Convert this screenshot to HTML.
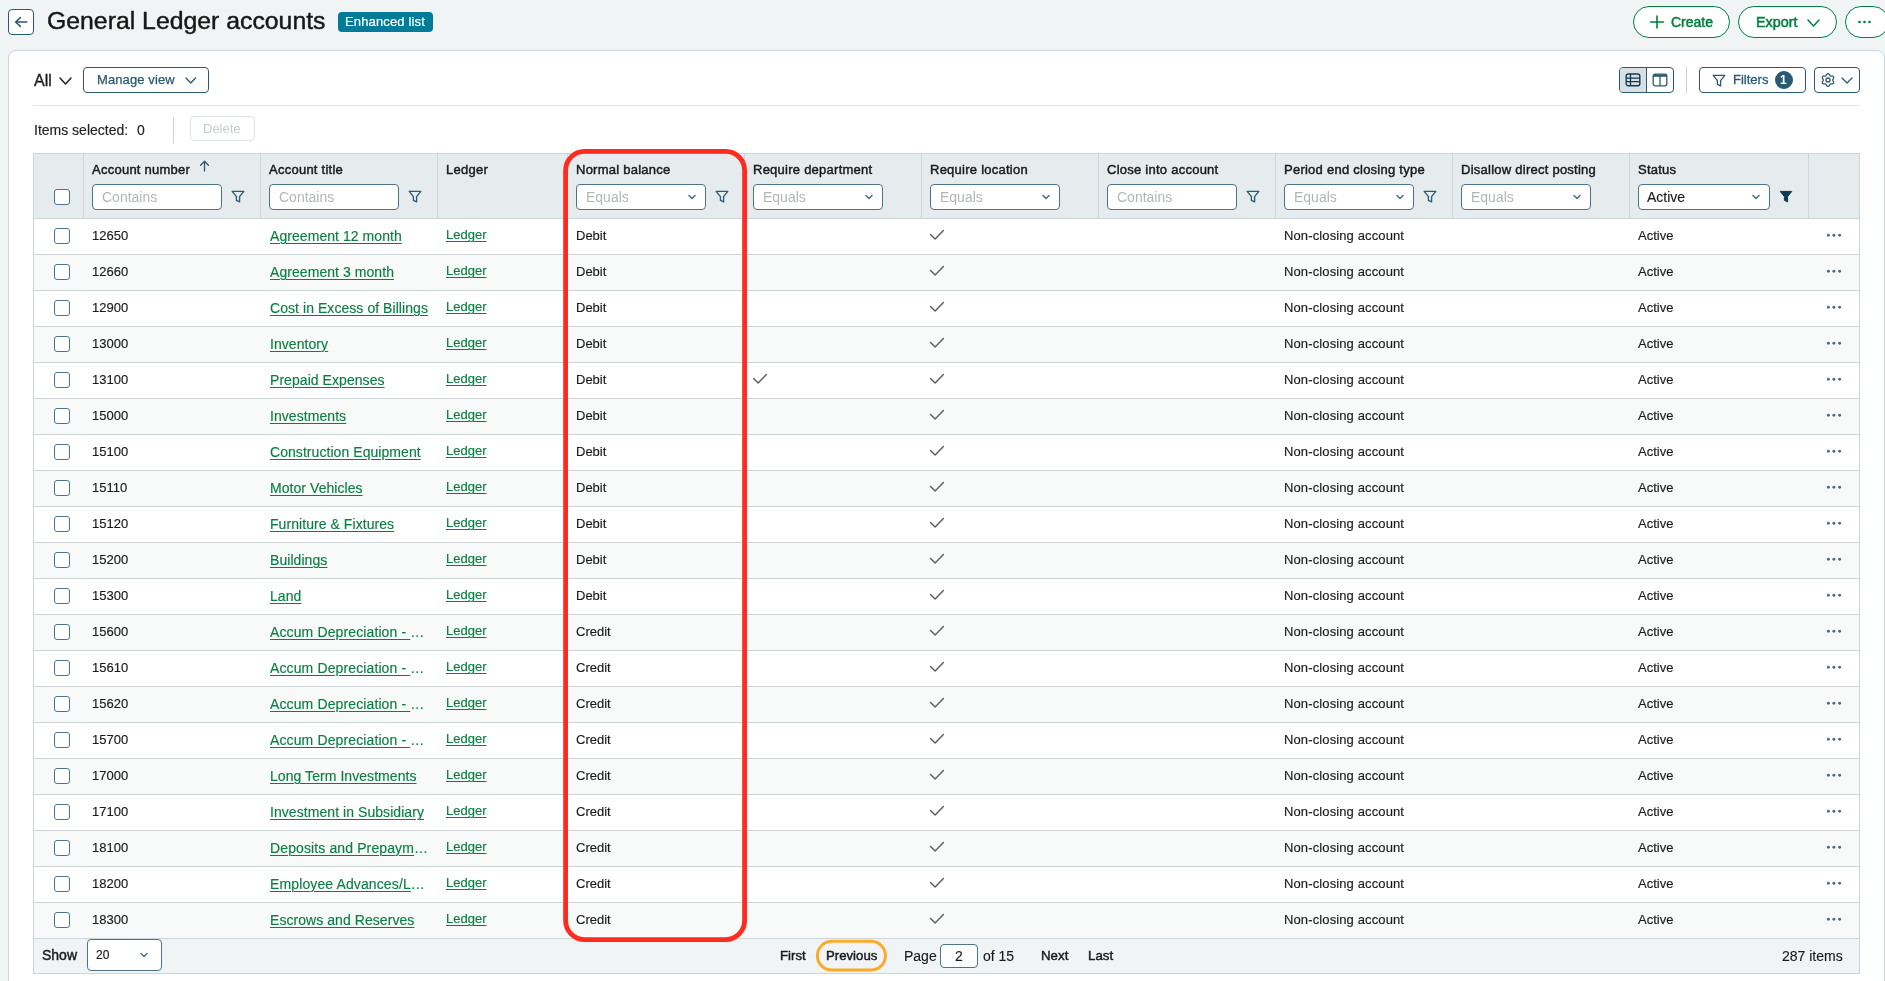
<!DOCTYPE html>
<html><head><meta charset="utf-8"><title>General Ledger accounts</title>
<style>
html,body{margin:0;padding:0;}
body{width:1885px;height:981px;overflow:hidden;background:#f1f4f5;position:relative;font-family:"Liberation Sans",sans-serif;}
.t{position:absolute;white-space:nowrap;will-change:transform;}
.b{position:absolute;box-sizing:border-box;}
.s{position:absolute;overflow:visible;}
.u{text-decoration:underline;text-underline-offset:2px;text-decoration-thickness:1px;}
</style></head><body>
<div class="b" style="left:8px;top:9px;width:26px;height:26px;border:1px solid #2a5a70;border-radius:4px;background:#fff;"></div>
<svg class="s" style="left:8px;top:9px;" width="26" height="26" viewBox="0 0 26 26" fill="none"><path d="M18.8 13 H7.8 M12.4 8.6 L7.6 13 L12.4 17.4" stroke="#2a5a70" stroke-width="1.5" stroke-linecap="round" stroke-linejoin="round"/></svg>
<div class="t" style="left:46.7px;top:9.21px;font-size:24.8px;line-height:24.8px;color:#161616;font-weight:400;-webkit-text-stroke:0.45px #161616;">General Ledger accounts</div>
<div class="b" style="left:338px;top:12px;width:95px;height:20px;background:#007c99;border-radius:4px;"></div>
<div class="t" style="left:344.8px;top:14.70px;font-size:13px;line-height:13px;color:#ffffff;font-weight:400;letter-spacing:0.15px;-webkit-text-stroke:0.2px #fff;">Enhanced list</div>
<div class="b" style="left:1633px;top:6px;width:97px;height:31.5px;border:1px solid #00803f;border-radius:16px;background:#fff;"></div>
<svg class="s" style="left:1649px;top:15px;" width="16" height="14" viewBox="0 0 16 14" fill="none"><path d="M8 1 V13 M1.5 7 H14.5" stroke="#00803f" stroke-width="1.6" stroke-linecap="round"/></svg>
<div class="t" style="left:1670.8px;top:15.15px;font-size:14px;line-height:14px;color:#00803f;font-weight:400;-webkit-text-stroke:0.5px #00803f;">Create</div>
<div class="b" style="left:1738px;top:6px;width:99px;height:31.5px;border:1px solid #00803f;border-radius:16px;background:#fff;"></div>
<div class="t" style="left:1755.6px;top:14.81px;font-size:14.4px;line-height:14.4px;color:#00803f;font-weight:400;-webkit-text-stroke:0.5px #00803f;">Export</div>
<svg class="s" style="left:1805.5px;top:17.5px;" width="15.0" height="10.0" viewBox="0 0 15.0 10.0" fill="none"><path d="M2 2 L7.5 8.0 L13.0 2" stroke="#00803f" stroke-width="1.5" stroke-linecap="round" stroke-linejoin="round"/></svg>
<div class="b" style="left:1845px;top:6px;width:44px;height:31.5px;border:1px solid #00803f;border-radius:16px;background:#fff;"></div>
<svg class="s" style="left:1856px;top:19px;" width="18" height="6" viewBox="0 0 18 6" fill="none"><circle cx="3.5" cy="3" r="1.35" fill="#00803f"/><circle cx="8.5" cy="3" r="1.35" fill="#00803f"/><circle cx="13.5" cy="3" r="1.35" fill="#00803f"/></svg>
<div class="b" style="left:8px;top:50px;width:1877px;height:950px;border:1px solid #cbd7dc;border-radius:8px;background:#fff;"></div>
<div class="t" style="left:34.3px;top:73.06px;font-size:16px;line-height:16px;color:#1c1c1c;font-weight:400;-webkit-text-stroke:0.35px #1c1c1c;">All</div>
<svg class="s" style="left:57.5px;top:75.5px;" width="15.0" height="10.0" viewBox="0 0 15.0 10.0" fill="none"><path d="M2 2 L7.5 8.0 L13.0 2" stroke="#222" stroke-width="1.5" stroke-linecap="round" stroke-linejoin="round"/></svg>
<div class="b" style="left:83px;top:67px;width:126px;height:26px;border:1px solid #2a5a70;border-radius:4px;background:#fff;"></div>
<div class="t" style="left:96.5px;top:73.20px;font-size:13px;line-height:13px;color:#2a5a70;font-weight:400;letter-spacing:0.1px;-webkit-text-stroke:0.25px #2a5a70;">Manage view</div>
<svg class="s" style="left:183.5px;top:76px;" width="13.5" height="9" viewBox="0 0 13.5 9" fill="none"><path d="M2 2 L6.75 7 L11.5 2" stroke="#2a5a70" stroke-width="1.3" stroke-linecap="round" stroke-linejoin="round"/></svg>
<div class="b" style="left:1619px;top:67px;width:55px;height:26px;border:1px solid #2a5a70;border-radius:4px;background:#fff;overflow:hidden;"></div>
<div class="b" style="left:1620px;top:68px;width:26px;height:24px;background:#d9e0e4;border-radius:3px 0 0 3px;"></div>
<div class="b" style="left:1646px;top:67px;width:1px;height:26px;background:#2a5a70;"></div>
<svg class="s" style="left:1625px;top:73px;" width="16" height="14" viewBox="0 0 16 14" fill="none"><rect x="1.2" y="1" width="13.6" height="11.8" rx="2" stroke="#0f3a52" stroke-width="1.4"/><path d="M1.2 5.2 H14.8 M1.2 8.6 H14.8 M5.5 1 V12.8" stroke="#0f3a52" stroke-width="1.3"/></svg>
<svg class="s" style="left:1652px;top:73px;" width="16" height="14" viewBox="0 0 16 14" fill="none"><rect x="1.2" y="1.2" width="13.6" height="11.6" rx="2" stroke="#2a5a70" stroke-width="1.3"/><path d="M1.2 2.6 H14.8" stroke="#2a5a70" stroke-width="2.4"/><path d="M8 3 V12.8" stroke="#2a5a70" stroke-width="1.3"/></svg>
<div class="b" style="left:1686px;top:67px;width:1px;height:26px;background:#c9d3d9;"></div>
<div class="b" style="left:1699px;top:67px;width:107px;height:26px;border:1px solid #2a5a70;border-radius:4px;background:#fff;"></div>
<svg class="s" style="left:1712px;top:73.5px;" width="14" height="13" viewBox="0 0 14 13" fill="none"><path d="M1.2 1.4 H12.8 L8.6 6.6 V11.9 L5.4 10.3 V6.6 Z" stroke="#2a5a70" stroke-width="1.3" stroke-linejoin="round"/></svg>
<div class="t" style="left:1732.5px;top:73.20px;font-size:13px;line-height:13px;color:#2a5a70;font-weight:400;-webkit-text-stroke:0.3px #2a5a70;">Filters</div>
<div class="b" style="left:1775px;top:71px;width:18px;height:18px;background:#2a5a70;border-radius:9px;"></div>
<div class="t" style="left:1780.3px;top:74.34px;font-size:12px;line-height:12px;color:#fff;font-weight:700;">1</div>
<div class="b" style="left:1814px;top:67px;width:46px;height:26px;border:1px solid #2a5a70;border-radius:4px;background:#fff;"></div>
<svg class="s" style="left:1821px;top:73px;" width="14" height="14" viewBox="0 0 14 14" fill="none"><path d="M11.70 7.00 L11.72 7.16 L11.76 7.33 L11.84 7.51 L11.93 7.69 L12.05 7.89 L12.17 8.10 L12.30 8.32 L12.42 8.55 L12.53 8.80 L12.61 9.04 L12.67 9.29 L12.70 9.54 L12.69 9.77 L12.63 10.00 L12.54 10.20 L12.41 10.38 L12.24 10.54 L12.05 10.67 L11.82 10.77 L11.58 10.84 L11.32 10.89 L11.06 10.92 L10.79 10.93 L10.54 10.93 L10.29 10.93 L10.07 10.93 L9.86 10.93 L9.67 10.96 L9.50 11.00 L9.35 11.07 L9.22 11.17 L9.09 11.29 L8.98 11.44 L8.87 11.62 L8.75 11.82 L8.63 12.03 L8.51 12.25 L8.36 12.47 L8.21 12.69 L8.04 12.88 L7.85 13.06 L7.65 13.20 L7.44 13.31 L7.22 13.38 L7.00 13.40 L6.78 13.38 L6.56 13.31 L6.35 13.20 L6.15 13.06 L5.96 12.88 L5.79 12.69 L5.64 12.47 L5.49 12.25 L5.37 12.03 L5.25 11.82 L5.13 11.62 L5.02 11.44 L4.91 11.29 L4.78 11.17 L4.65 11.07 L4.50 11.00 L4.33 10.96 L4.14 10.93 L3.93 10.93 L3.71 10.93 L3.46 10.93 L3.21 10.93 L2.94 10.92 L2.68 10.89 L2.42 10.84 L2.18 10.77 L1.95 10.67 L1.76 10.54 L1.59 10.38 L1.46 10.20 L1.37 10.00 L1.31 9.77 L1.30 9.54 L1.33 9.29 L1.39 9.04 L1.47 8.80 L1.58 8.55 L1.70 8.32 L1.83 8.10 L1.95 7.89 L2.07 7.69 L2.16 7.51 L2.24 7.33 L2.28 7.16 L2.30 7.00 L2.28 6.84 L2.24 6.67 L2.16 6.49 L2.07 6.31 L1.95 6.11 L1.83 5.90 L1.70 5.68 L1.58 5.45 L1.47 5.20 L1.39 4.96 L1.33 4.71 L1.30 4.46 L1.31 4.23 L1.37 4.00 L1.46 3.80 L1.59 3.62 L1.76 3.46 L1.95 3.33 L2.18 3.23 L2.42 3.16 L2.68 3.11 L2.94 3.08 L3.21 3.07 L3.46 3.07 L3.71 3.07 L3.93 3.07 L4.14 3.07 L4.33 3.04 L4.50 3.00 L4.65 2.93 L4.78 2.83 L4.91 2.71 L5.02 2.56 L5.13 2.38 L5.25 2.18 L5.37 1.97 L5.49 1.75 L5.64 1.53 L5.79 1.31 L5.96 1.12 L6.15 0.94 L6.35 0.80 L6.56 0.69 L6.78 0.62 L7.00 0.60 L7.22 0.62 L7.44 0.69 L7.65 0.80 L7.85 0.94 L8.04 1.12 L8.21 1.31 L8.36 1.53 L8.51 1.75 L8.63 1.97 L8.75 2.18 L8.87 2.38 L8.98 2.56 L9.09 2.71 L9.22 2.83 L9.35 2.93 L9.50 3.00 L9.67 3.04 L9.86 3.07 L10.07 3.07 L10.29 3.07 L10.54 3.07 L10.79 3.07 L11.06 3.08 L11.32 3.11 L11.58 3.16 L11.82 3.23 L12.05 3.33 L12.24 3.46 L12.41 3.62 L12.54 3.80 L12.63 4.00 L12.69 4.23 L12.70 4.46 L12.67 4.71 L12.61 4.96 L12.53 5.20 L12.42 5.45 L12.30 5.68 L12.17 5.90 L12.05 6.11 L11.93 6.31 L11.84 6.49 L11.76 6.67 L11.72 6.84 L11.70 7.00 Z" stroke="#2a5a70" stroke-width="1.3" stroke-linejoin="round"/><circle cx="7" cy="7" r="2.0" stroke="#2a5a70" stroke-width="1.3"/></svg>
<svg class="s" style="left:1840px;top:75.7px;" width="14" height="9.0" viewBox="0 0 14 9.0" fill="none"><path d="M2 2 L7.0 7.0 L12 2" stroke="#2a5a70" stroke-width="1.3" stroke-linecap="round" stroke-linejoin="round"/></svg>
<div class="b" style="left:33px;top:105px;width:1827px;height:1px;background:#e1e7ea;"></div>
<div class="t" style="left:33.5px;top:123.35px;font-size:14px;line-height:14px;color:#222;font-weight:400;-webkit-text-stroke:0.15px #222;">Items selected:</div>
<div class="t" style="left:136.5px;top:123.35px;font-size:14px;line-height:14px;color:#222;font-weight:400;-webkit-text-stroke:0.15px #222;">0</div>
<div class="b" style="left:173px;top:117px;width:1px;height:26px;background:#c9d3d9;"></div>
<div class="b" style="left:190px;top:116px;width:65px;height:25px;border:1px solid #dfe4e7;border-radius:4px;background:#fff;"></div>
<div class="t" style="left:203px;top:122.00px;font-size:13px;line-height:13px;color:#c5cbce;font-weight:400;">Delete</div>
<div class="b" style="left:33px;top:153px;width:1827px;height:821px;border:1px solid #cad6db;background:#fff;"></div>
<div class="b" style="left:34px;top:154px;width:1825px;height:64px;background:#e6ebee;"></div>
<div class="b" style="left:33px;top:218px;width:1827px;height:1px;background:#cad6db;"></div>
<div class="b" style="left:83px;top:154px;width:1px;height:64px;background:#cad6db;"></div>
<div class="b" style="left:260px;top:154px;width:1px;height:64px;background:#cad6db;"></div>
<div class="b" style="left:437px;top:154px;width:1px;height:64px;background:#cad6db;"></div>
<div class="b" style="left:567px;top:154px;width:1px;height:64px;background:#cad6db;"></div>
<div class="b" style="left:744px;top:154px;width:1px;height:64px;background:#cad6db;"></div>
<div class="b" style="left:921px;top:154px;width:1px;height:64px;background:#cad6db;"></div>
<div class="b" style="left:1098px;top:154px;width:1px;height:64px;background:#cad6db;"></div>
<div class="b" style="left:1275px;top:154px;width:1px;height:64px;background:#cad6db;"></div>
<div class="b" style="left:1452px;top:154px;width:1px;height:64px;background:#cad6db;"></div>
<div class="b" style="left:1629px;top:154px;width:1px;height:64px;background:#cad6db;"></div>
<div class="b" style="left:1808px;top:154px;width:1px;height:64px;background:#cad6db;"></div>
<div class="b" style="left:54px;top:189px;width:16px;height:16px;border:1px solid #4f7489;border-radius:3px;background:#fff;"></div>
<div class="t" style="left:92.3px;top:163.30px;font-size:13px;line-height:13px;color:#1a1a1a;font-weight:400;letter-spacing:0.25px;-webkit-text-stroke:0.45px #1a1a1a;">Account number</div>
<div class="b" style="left:92px;top:184px;width:130px;height:25.599999999999994px;border:1px solid #4f7489;border-radius:4px;background:#fff;"></div>
<div class="t" style="left:101.5px;top:190.35px;font-size:14px;line-height:14px;color:#b3b6b8;font-weight:400;">Contains</div>
<svg class="s" style="left:231px;top:190.3px;" width="14" height="13" viewBox="0 0 14 13" fill="none"><path d="M1.2 1.4 H12.8 L8.6 6.6 V11.9 L5.4 10.3 V6.6 Z" stroke="#2d5d73" stroke-width="1.35" stroke-linejoin="round"/></svg>
<div class="t" style="left:269.3px;top:163.30px;font-size:13px;line-height:13px;color:#1a1a1a;font-weight:400;letter-spacing:0.25px;-webkit-text-stroke:0.45px #1a1a1a;">Account title</div>
<div class="b" style="left:269px;top:184px;width:130px;height:25.599999999999994px;border:1px solid #4f7489;border-radius:4px;background:#fff;"></div>
<div class="t" style="left:278.5px;top:190.35px;font-size:14px;line-height:14px;color:#b3b6b8;font-weight:400;">Contains</div>
<svg class="s" style="left:408px;top:190.3px;" width="14" height="13" viewBox="0 0 14 13" fill="none"><path d="M1.2 1.4 H12.8 L8.6 6.6 V11.9 L5.4 10.3 V6.6 Z" stroke="#2d5d73" stroke-width="1.35" stroke-linejoin="round"/></svg>
<div class="t" style="left:446.3px;top:163.30px;font-size:13px;line-height:13px;color:#1a1a1a;font-weight:400;letter-spacing:0.25px;-webkit-text-stroke:0.45px #1a1a1a;">Ledger</div>
<div class="t" style="left:576.3px;top:163.30px;font-size:13px;line-height:13px;color:#1a1a1a;font-weight:400;letter-spacing:0.25px;-webkit-text-stroke:0.45px #1a1a1a;">Normal balance</div>
<div class="b" style="left:576px;top:184px;width:130px;height:25.599999999999994px;border:1px solid #4f7489;border-radius:4px;background:#fff;"></div>
<div class="t" style="left:585.5px;top:190.35px;font-size:14px;line-height:14px;color:#b3b6b8;font-weight:400;">Equals</div>
<svg class="s" style="left:687px;top:192.5px;" width="10" height="8" viewBox="0 0 10 8" fill="none"><path d="M2 2.5 L5 5.5 L8 2.5" stroke="#4f7489" stroke-width="1.6" stroke-linecap="round" stroke-linejoin="round"/></svg>
<svg class="s" style="left:715px;top:190.3px;" width="14" height="13" viewBox="0 0 14 13" fill="none"><path d="M1.2 1.4 H12.8 L8.6 6.6 V11.9 L5.4 10.3 V6.6 Z" stroke="#2d5d73" stroke-width="1.35" stroke-linejoin="round"/></svg>
<div class="t" style="left:753.3px;top:163.30px;font-size:13px;line-height:13px;color:#1a1a1a;font-weight:400;letter-spacing:0.25px;-webkit-text-stroke:0.45px #1a1a1a;">Require department</div>
<div class="b" style="left:753px;top:184px;width:130px;height:25.599999999999994px;border:1px solid #4f7489;border-radius:4px;background:#fff;"></div>
<div class="t" style="left:762.5px;top:190.35px;font-size:14px;line-height:14px;color:#b3b6b8;font-weight:400;">Equals</div>
<svg class="s" style="left:864px;top:192.5px;" width="10" height="8" viewBox="0 0 10 8" fill="none"><path d="M2 2.5 L5 5.5 L8 2.5" stroke="#4f7489" stroke-width="1.6" stroke-linecap="round" stroke-linejoin="round"/></svg>
<div class="t" style="left:930.3px;top:163.30px;font-size:13px;line-height:13px;color:#1a1a1a;font-weight:400;letter-spacing:0.25px;-webkit-text-stroke:0.45px #1a1a1a;">Require location</div>
<div class="b" style="left:930px;top:184px;width:130px;height:25.599999999999994px;border:1px solid #4f7489;border-radius:4px;background:#fff;"></div>
<div class="t" style="left:939.5px;top:190.35px;font-size:14px;line-height:14px;color:#b3b6b8;font-weight:400;">Equals</div>
<svg class="s" style="left:1041px;top:192.5px;" width="10" height="8" viewBox="0 0 10 8" fill="none"><path d="M2 2.5 L5 5.5 L8 2.5" stroke="#4f7489" stroke-width="1.6" stroke-linecap="round" stroke-linejoin="round"/></svg>
<div class="t" style="left:1107.3px;top:163.30px;font-size:13px;line-height:13px;color:#1a1a1a;font-weight:400;letter-spacing:0.25px;-webkit-text-stroke:0.45px #1a1a1a;">Close into account</div>
<div class="b" style="left:1107px;top:184px;width:130px;height:25.599999999999994px;border:1px solid #4f7489;border-radius:4px;background:#fff;"></div>
<div class="t" style="left:1116.5px;top:190.35px;font-size:14px;line-height:14px;color:#b3b6b8;font-weight:400;">Contains</div>
<svg class="s" style="left:1246px;top:190.3px;" width="14" height="13" viewBox="0 0 14 13" fill="none"><path d="M1.2 1.4 H12.8 L8.6 6.6 V11.9 L5.4 10.3 V6.6 Z" stroke="#2d5d73" stroke-width="1.35" stroke-linejoin="round"/></svg>
<div class="t" style="left:1284.3px;top:163.30px;font-size:13px;line-height:13px;color:#1a1a1a;font-weight:400;letter-spacing:0.25px;-webkit-text-stroke:0.45px #1a1a1a;">Period end closing type</div>
<div class="b" style="left:1284px;top:184px;width:130px;height:25.599999999999994px;border:1px solid #4f7489;border-radius:4px;background:#fff;"></div>
<div class="t" style="left:1293.5px;top:190.35px;font-size:14px;line-height:14px;color:#b3b6b8;font-weight:400;">Equals</div>
<svg class="s" style="left:1395px;top:192.5px;" width="10" height="8" viewBox="0 0 10 8" fill="none"><path d="M2 2.5 L5 5.5 L8 2.5" stroke="#4f7489" stroke-width="1.6" stroke-linecap="round" stroke-linejoin="round"/></svg>
<svg class="s" style="left:1423px;top:190.3px;" width="14" height="13" viewBox="0 0 14 13" fill="none"><path d="M1.2 1.4 H12.8 L8.6 6.6 V11.9 L5.4 10.3 V6.6 Z" stroke="#2d5d73" stroke-width="1.35" stroke-linejoin="round"/></svg>
<div class="t" style="left:1461.3px;top:163.30px;font-size:13px;line-height:13px;color:#1a1a1a;font-weight:400;letter-spacing:0.25px;-webkit-text-stroke:0.45px #1a1a1a;">Disallow direct posting</div>
<div class="b" style="left:1461px;top:184px;width:130px;height:25.599999999999994px;border:1px solid #4f7489;border-radius:4px;background:#fff;"></div>
<div class="t" style="left:1470.5px;top:190.35px;font-size:14px;line-height:14px;color:#b3b6b8;font-weight:400;">Equals</div>
<svg class="s" style="left:1572px;top:192.5px;" width="10" height="8" viewBox="0 0 10 8" fill="none"><path d="M2 2.5 L5 5.5 L8 2.5" stroke="#4f7489" stroke-width="1.6" stroke-linecap="round" stroke-linejoin="round"/></svg>
<div class="t" style="left:1638.3px;top:163.30px;font-size:13px;line-height:13px;color:#1a1a1a;font-weight:400;letter-spacing:0.25px;-webkit-text-stroke:0.45px #1a1a1a;">Status</div>
<div class="b" style="left:1638px;top:184px;width:132px;height:25.599999999999994px;border:1px solid #4f7489;border-radius:4px;background:#fff;"></div>
<div class="t" style="left:1647px;top:190.35px;font-size:14px;line-height:14px;color:#1a1a1a;font-weight:400;-webkit-text-stroke:0.15px #1a1a1a;">Active</div>
<svg class="s" style="left:1751px;top:192.5px;" width="10" height="8" viewBox="0 0 10 8" fill="none"><path d="M2 2.5 L5 5.5 L8 2.5" stroke="#4f7489" stroke-width="1.6" stroke-linecap="round" stroke-linejoin="round"/></svg>
<svg class="s" style="left:1779px;top:190.3px;" width="14" height="13" viewBox="0 0 14 13" fill="none"><path d="M1.2 1.4 H12.8 L8.6 6.6 V11.9 L5.4 10.3 V6.6 Z" fill="#0f3a52" stroke="#0f3a52" stroke-width="1" stroke-linejoin="round"/></svg>
<svg class="s" style="left:199px;top:160px;" width="12" height="12" viewBox="0 0 12 12" fill="none"><path d="M5.5 11 V1.3 M1.6 5.2 L5.5 1.3 L9.4 5.2" stroke="#2a5a70" stroke-width="1.3" stroke-linecap="round" stroke-linejoin="round"/></svg>
<div class="b" style="left:33px;top:254px;width:1827px;height:1px;background:#cad6db;"></div>
<div class="b" style="left:54px;top:228px;width:16px;height:16px;border:1px solid #4f7489;border-radius:3px;background:#fff;"></div>
<div class="t" style="left:92px;top:229.20px;font-size:13px;line-height:13px;color:#1a1a1a;font-weight:400;-webkit-text-stroke:0.15px #1a1a1a;">12650</div>
<div class="t" style="left:270px;top:228.65px;font-size:14px;line-height:14px;color:#087f43;font-weight:400;letter-spacing:0.06px;-webkit-text-stroke:0.15px #087f43;"><span class="u">Agreement 12 month</span></div>
<div class="t" style="left:446px;top:228.00px;font-size:13px;line-height:13px;color:#087f43;font-weight:400;-webkit-text-stroke:0.15px #087f43;"><span class="u">Ledger</span></div>
<div class="t" style="left:576px;top:229.20px;font-size:13px;line-height:13px;color:#1a1a1a;font-weight:400;-webkit-text-stroke:0.15px #1a1a1a;">Debit</div>
<svg class="s" style="left:929px;top:229px;" width="16" height="12" viewBox="0 0 16 12" fill="none"><path d="M1.6 5.6 L6.1 9.9 L14.4 1.6" stroke="#5b5b5b" stroke-width="1.4" stroke-linecap="round" stroke-linejoin="round"/></svg>
<div class="t" style="left:1284px;top:229.20px;font-size:13px;line-height:13px;color:#1a1a1a;font-weight:400;letter-spacing:0.12px;-webkit-text-stroke:0.15px #1a1a1a;">Non-closing account</div>
<div class="t" style="left:1638px;top:229.20px;font-size:13px;line-height:13px;color:#1a1a1a;font-weight:400;-webkit-text-stroke:0.15px #1a1a1a;">Active</div>
<svg class="s" style="left:1826px;top:233px;" width="17" height="5" viewBox="0 0 17 5" fill="none"><circle cx="2.4" cy="2.2" r="1.45" fill="#466f85"/><circle cx="7.9" cy="2.2" r="1.45" fill="#466f85"/><circle cx="13.6" cy="2.2" r="1.45" fill="#466f85"/></svg>
<div class="b" style="left:34px;top:255px;width:1825px;height:35px;background:#f8f9f9;"></div>
<div class="b" style="left:33px;top:290px;width:1827px;height:1px;background:#cad6db;"></div>
<div class="b" style="left:54px;top:264px;width:16px;height:16px;border:1px solid #4f7489;border-radius:3px;background:#fff;"></div>
<div class="t" style="left:92px;top:265.20px;font-size:13px;line-height:13px;color:#1a1a1a;font-weight:400;-webkit-text-stroke:0.15px #1a1a1a;">12660</div>
<div class="t" style="left:270px;top:264.65px;font-size:14px;line-height:14px;color:#087f43;font-weight:400;letter-spacing:0.06px;-webkit-text-stroke:0.15px #087f43;"><span class="u">Agreement 3 month</span></div>
<div class="t" style="left:446px;top:264.00px;font-size:13px;line-height:13px;color:#087f43;font-weight:400;-webkit-text-stroke:0.15px #087f43;"><span class="u">Ledger</span></div>
<div class="t" style="left:576px;top:265.20px;font-size:13px;line-height:13px;color:#1a1a1a;font-weight:400;-webkit-text-stroke:0.15px #1a1a1a;">Debit</div>
<svg class="s" style="left:929px;top:265px;" width="16" height="12" viewBox="0 0 16 12" fill="none"><path d="M1.6 5.6 L6.1 9.9 L14.4 1.6" stroke="#5b5b5b" stroke-width="1.4" stroke-linecap="round" stroke-linejoin="round"/></svg>
<div class="t" style="left:1284px;top:265.20px;font-size:13px;line-height:13px;color:#1a1a1a;font-weight:400;letter-spacing:0.12px;-webkit-text-stroke:0.15px #1a1a1a;">Non-closing account</div>
<div class="t" style="left:1638px;top:265.20px;font-size:13px;line-height:13px;color:#1a1a1a;font-weight:400;-webkit-text-stroke:0.15px #1a1a1a;">Active</div>
<svg class="s" style="left:1826px;top:269px;" width="17" height="5" viewBox="0 0 17 5" fill="none"><circle cx="2.4" cy="2.2" r="1.45" fill="#466f85"/><circle cx="7.9" cy="2.2" r="1.45" fill="#466f85"/><circle cx="13.6" cy="2.2" r="1.45" fill="#466f85"/></svg>
<div class="b" style="left:33px;top:326px;width:1827px;height:1px;background:#cad6db;"></div>
<div class="b" style="left:54px;top:300px;width:16px;height:16px;border:1px solid #4f7489;border-radius:3px;background:#fff;"></div>
<div class="t" style="left:92px;top:301.20px;font-size:13px;line-height:13px;color:#1a1a1a;font-weight:400;-webkit-text-stroke:0.15px #1a1a1a;">12900</div>
<div class="t" style="left:270px;top:300.65px;font-size:14px;line-height:14px;color:#087f43;font-weight:400;letter-spacing:0.06px;-webkit-text-stroke:0.15px #087f43;"><span class="u">Cost in Excess of Billings</span></div>
<div class="t" style="left:446px;top:300.00px;font-size:13px;line-height:13px;color:#087f43;font-weight:400;-webkit-text-stroke:0.15px #087f43;"><span class="u">Ledger</span></div>
<div class="t" style="left:576px;top:301.20px;font-size:13px;line-height:13px;color:#1a1a1a;font-weight:400;-webkit-text-stroke:0.15px #1a1a1a;">Debit</div>
<svg class="s" style="left:929px;top:301px;" width="16" height="12" viewBox="0 0 16 12" fill="none"><path d="M1.6 5.6 L6.1 9.9 L14.4 1.6" stroke="#5b5b5b" stroke-width="1.4" stroke-linecap="round" stroke-linejoin="round"/></svg>
<div class="t" style="left:1284px;top:301.20px;font-size:13px;line-height:13px;color:#1a1a1a;font-weight:400;letter-spacing:0.12px;-webkit-text-stroke:0.15px #1a1a1a;">Non-closing account</div>
<div class="t" style="left:1638px;top:301.20px;font-size:13px;line-height:13px;color:#1a1a1a;font-weight:400;-webkit-text-stroke:0.15px #1a1a1a;">Active</div>
<svg class="s" style="left:1826px;top:305px;" width="17" height="5" viewBox="0 0 17 5" fill="none"><circle cx="2.4" cy="2.2" r="1.45" fill="#466f85"/><circle cx="7.9" cy="2.2" r="1.45" fill="#466f85"/><circle cx="13.6" cy="2.2" r="1.45" fill="#466f85"/></svg>
<div class="b" style="left:34px;top:327px;width:1825px;height:35px;background:#f8f9f9;"></div>
<div class="b" style="left:33px;top:362px;width:1827px;height:1px;background:#cad6db;"></div>
<div class="b" style="left:54px;top:336px;width:16px;height:16px;border:1px solid #4f7489;border-radius:3px;background:#fff;"></div>
<div class="t" style="left:92px;top:337.20px;font-size:13px;line-height:13px;color:#1a1a1a;font-weight:400;-webkit-text-stroke:0.15px #1a1a1a;">13000</div>
<div class="t" style="left:270px;top:336.65px;font-size:14px;line-height:14px;color:#087f43;font-weight:400;letter-spacing:0.06px;-webkit-text-stroke:0.15px #087f43;"><span class="u">Inventory</span></div>
<div class="t" style="left:446px;top:336.00px;font-size:13px;line-height:13px;color:#087f43;font-weight:400;-webkit-text-stroke:0.15px #087f43;"><span class="u">Ledger</span></div>
<div class="t" style="left:576px;top:337.20px;font-size:13px;line-height:13px;color:#1a1a1a;font-weight:400;-webkit-text-stroke:0.15px #1a1a1a;">Debit</div>
<svg class="s" style="left:929px;top:337px;" width="16" height="12" viewBox="0 0 16 12" fill="none"><path d="M1.6 5.6 L6.1 9.9 L14.4 1.6" stroke="#5b5b5b" stroke-width="1.4" stroke-linecap="round" stroke-linejoin="round"/></svg>
<div class="t" style="left:1284px;top:337.20px;font-size:13px;line-height:13px;color:#1a1a1a;font-weight:400;letter-spacing:0.12px;-webkit-text-stroke:0.15px #1a1a1a;">Non-closing account</div>
<div class="t" style="left:1638px;top:337.20px;font-size:13px;line-height:13px;color:#1a1a1a;font-weight:400;-webkit-text-stroke:0.15px #1a1a1a;">Active</div>
<svg class="s" style="left:1826px;top:341px;" width="17" height="5" viewBox="0 0 17 5" fill="none"><circle cx="2.4" cy="2.2" r="1.45" fill="#466f85"/><circle cx="7.9" cy="2.2" r="1.45" fill="#466f85"/><circle cx="13.6" cy="2.2" r="1.45" fill="#466f85"/></svg>
<div class="b" style="left:33px;top:398px;width:1827px;height:1px;background:#cad6db;"></div>
<div class="b" style="left:54px;top:372px;width:16px;height:16px;border:1px solid #4f7489;border-radius:3px;background:#fff;"></div>
<div class="t" style="left:92px;top:373.20px;font-size:13px;line-height:13px;color:#1a1a1a;font-weight:400;-webkit-text-stroke:0.15px #1a1a1a;">13100</div>
<div class="t" style="left:270px;top:372.65px;font-size:14px;line-height:14px;color:#087f43;font-weight:400;letter-spacing:0.06px;-webkit-text-stroke:0.15px #087f43;"><span class="u">Prepaid Expenses</span></div>
<div class="t" style="left:446px;top:372.00px;font-size:13px;line-height:13px;color:#087f43;font-weight:400;-webkit-text-stroke:0.15px #087f43;"><span class="u">Ledger</span></div>
<div class="t" style="left:576px;top:373.20px;font-size:13px;line-height:13px;color:#1a1a1a;font-weight:400;-webkit-text-stroke:0.15px #1a1a1a;">Debit</div>
<svg class="s" style="left:752px;top:373px;" width="16" height="12" viewBox="0 0 16 12" fill="none"><path d="M1.6 5.6 L6.1 9.9 L14.4 1.6" stroke="#5b5b5b" stroke-width="1.4" stroke-linecap="round" stroke-linejoin="round"/></svg>
<svg class="s" style="left:929px;top:373px;" width="16" height="12" viewBox="0 0 16 12" fill="none"><path d="M1.6 5.6 L6.1 9.9 L14.4 1.6" stroke="#5b5b5b" stroke-width="1.4" stroke-linecap="round" stroke-linejoin="round"/></svg>
<div class="t" style="left:1284px;top:373.20px;font-size:13px;line-height:13px;color:#1a1a1a;font-weight:400;letter-spacing:0.12px;-webkit-text-stroke:0.15px #1a1a1a;">Non-closing account</div>
<div class="t" style="left:1638px;top:373.20px;font-size:13px;line-height:13px;color:#1a1a1a;font-weight:400;-webkit-text-stroke:0.15px #1a1a1a;">Active</div>
<svg class="s" style="left:1826px;top:377px;" width="17" height="5" viewBox="0 0 17 5" fill="none"><circle cx="2.4" cy="2.2" r="1.45" fill="#466f85"/><circle cx="7.9" cy="2.2" r="1.45" fill="#466f85"/><circle cx="13.6" cy="2.2" r="1.45" fill="#466f85"/></svg>
<div class="b" style="left:34px;top:399px;width:1825px;height:35px;background:#f8f9f9;"></div>
<div class="b" style="left:33px;top:434px;width:1827px;height:1px;background:#cad6db;"></div>
<div class="b" style="left:54px;top:408px;width:16px;height:16px;border:1px solid #4f7489;border-radius:3px;background:#fff;"></div>
<div class="t" style="left:92px;top:409.20px;font-size:13px;line-height:13px;color:#1a1a1a;font-weight:400;-webkit-text-stroke:0.15px #1a1a1a;">15000</div>
<div class="t" style="left:270px;top:408.65px;font-size:14px;line-height:14px;color:#087f43;font-weight:400;letter-spacing:0.06px;-webkit-text-stroke:0.15px #087f43;"><span class="u">Investments</span></div>
<div class="t" style="left:446px;top:408.00px;font-size:13px;line-height:13px;color:#087f43;font-weight:400;-webkit-text-stroke:0.15px #087f43;"><span class="u">Ledger</span></div>
<div class="t" style="left:576px;top:409.20px;font-size:13px;line-height:13px;color:#1a1a1a;font-weight:400;-webkit-text-stroke:0.15px #1a1a1a;">Debit</div>
<svg class="s" style="left:929px;top:409px;" width="16" height="12" viewBox="0 0 16 12" fill="none"><path d="M1.6 5.6 L6.1 9.9 L14.4 1.6" stroke="#5b5b5b" stroke-width="1.4" stroke-linecap="round" stroke-linejoin="round"/></svg>
<div class="t" style="left:1284px;top:409.20px;font-size:13px;line-height:13px;color:#1a1a1a;font-weight:400;letter-spacing:0.12px;-webkit-text-stroke:0.15px #1a1a1a;">Non-closing account</div>
<div class="t" style="left:1638px;top:409.20px;font-size:13px;line-height:13px;color:#1a1a1a;font-weight:400;-webkit-text-stroke:0.15px #1a1a1a;">Active</div>
<svg class="s" style="left:1826px;top:413px;" width="17" height="5" viewBox="0 0 17 5" fill="none"><circle cx="2.4" cy="2.2" r="1.45" fill="#466f85"/><circle cx="7.9" cy="2.2" r="1.45" fill="#466f85"/><circle cx="13.6" cy="2.2" r="1.45" fill="#466f85"/></svg>
<div class="b" style="left:33px;top:470px;width:1827px;height:1px;background:#cad6db;"></div>
<div class="b" style="left:54px;top:444px;width:16px;height:16px;border:1px solid #4f7489;border-radius:3px;background:#fff;"></div>
<div class="t" style="left:92px;top:445.20px;font-size:13px;line-height:13px;color:#1a1a1a;font-weight:400;-webkit-text-stroke:0.15px #1a1a1a;">15100</div>
<div class="t" style="left:270px;top:444.65px;font-size:14px;line-height:14px;color:#087f43;font-weight:400;letter-spacing:0.06px;-webkit-text-stroke:0.15px #087f43;"><span class="u">Construction Equipment</span></div>
<div class="t" style="left:446px;top:444.00px;font-size:13px;line-height:13px;color:#087f43;font-weight:400;-webkit-text-stroke:0.15px #087f43;"><span class="u">Ledger</span></div>
<div class="t" style="left:576px;top:445.20px;font-size:13px;line-height:13px;color:#1a1a1a;font-weight:400;-webkit-text-stroke:0.15px #1a1a1a;">Debit</div>
<svg class="s" style="left:929px;top:445px;" width="16" height="12" viewBox="0 0 16 12" fill="none"><path d="M1.6 5.6 L6.1 9.9 L14.4 1.6" stroke="#5b5b5b" stroke-width="1.4" stroke-linecap="round" stroke-linejoin="round"/></svg>
<div class="t" style="left:1284px;top:445.20px;font-size:13px;line-height:13px;color:#1a1a1a;font-weight:400;letter-spacing:0.12px;-webkit-text-stroke:0.15px #1a1a1a;">Non-closing account</div>
<div class="t" style="left:1638px;top:445.20px;font-size:13px;line-height:13px;color:#1a1a1a;font-weight:400;-webkit-text-stroke:0.15px #1a1a1a;">Active</div>
<svg class="s" style="left:1826px;top:449px;" width="17" height="5" viewBox="0 0 17 5" fill="none"><circle cx="2.4" cy="2.2" r="1.45" fill="#466f85"/><circle cx="7.9" cy="2.2" r="1.45" fill="#466f85"/><circle cx="13.6" cy="2.2" r="1.45" fill="#466f85"/></svg>
<div class="b" style="left:34px;top:471px;width:1825px;height:35px;background:#f8f9f9;"></div>
<div class="b" style="left:33px;top:506px;width:1827px;height:1px;background:#cad6db;"></div>
<div class="b" style="left:54px;top:480px;width:16px;height:16px;border:1px solid #4f7489;border-radius:3px;background:#fff;"></div>
<div class="t" style="left:92px;top:481.20px;font-size:13px;line-height:13px;color:#1a1a1a;font-weight:400;-webkit-text-stroke:0.15px #1a1a1a;">15110</div>
<div class="t" style="left:270px;top:480.65px;font-size:14px;line-height:14px;color:#087f43;font-weight:400;letter-spacing:0.06px;-webkit-text-stroke:0.15px #087f43;"><span class="u">Motor Vehicles</span></div>
<div class="t" style="left:446px;top:480.00px;font-size:13px;line-height:13px;color:#087f43;font-weight:400;-webkit-text-stroke:0.15px #087f43;"><span class="u">Ledger</span></div>
<div class="t" style="left:576px;top:481.20px;font-size:13px;line-height:13px;color:#1a1a1a;font-weight:400;-webkit-text-stroke:0.15px #1a1a1a;">Debit</div>
<svg class="s" style="left:929px;top:481px;" width="16" height="12" viewBox="0 0 16 12" fill="none"><path d="M1.6 5.6 L6.1 9.9 L14.4 1.6" stroke="#5b5b5b" stroke-width="1.4" stroke-linecap="round" stroke-linejoin="round"/></svg>
<div class="t" style="left:1284px;top:481.20px;font-size:13px;line-height:13px;color:#1a1a1a;font-weight:400;letter-spacing:0.12px;-webkit-text-stroke:0.15px #1a1a1a;">Non-closing account</div>
<div class="t" style="left:1638px;top:481.20px;font-size:13px;line-height:13px;color:#1a1a1a;font-weight:400;-webkit-text-stroke:0.15px #1a1a1a;">Active</div>
<svg class="s" style="left:1826px;top:485px;" width="17" height="5" viewBox="0 0 17 5" fill="none"><circle cx="2.4" cy="2.2" r="1.45" fill="#466f85"/><circle cx="7.9" cy="2.2" r="1.45" fill="#466f85"/><circle cx="13.6" cy="2.2" r="1.45" fill="#466f85"/></svg>
<div class="b" style="left:33px;top:542px;width:1827px;height:1px;background:#cad6db;"></div>
<div class="b" style="left:54px;top:516px;width:16px;height:16px;border:1px solid #4f7489;border-radius:3px;background:#fff;"></div>
<div class="t" style="left:92px;top:517.20px;font-size:13px;line-height:13px;color:#1a1a1a;font-weight:400;-webkit-text-stroke:0.15px #1a1a1a;">15120</div>
<div class="t" style="left:270px;top:516.65px;font-size:14px;line-height:14px;color:#087f43;font-weight:400;letter-spacing:0.06px;-webkit-text-stroke:0.15px #087f43;"><span class="u">Furniture &amp; Fixtures</span></div>
<div class="t" style="left:446px;top:516.00px;font-size:13px;line-height:13px;color:#087f43;font-weight:400;-webkit-text-stroke:0.15px #087f43;"><span class="u">Ledger</span></div>
<div class="t" style="left:576px;top:517.20px;font-size:13px;line-height:13px;color:#1a1a1a;font-weight:400;-webkit-text-stroke:0.15px #1a1a1a;">Debit</div>
<svg class="s" style="left:929px;top:517px;" width="16" height="12" viewBox="0 0 16 12" fill="none"><path d="M1.6 5.6 L6.1 9.9 L14.4 1.6" stroke="#5b5b5b" stroke-width="1.4" stroke-linecap="round" stroke-linejoin="round"/></svg>
<div class="t" style="left:1284px;top:517.20px;font-size:13px;line-height:13px;color:#1a1a1a;font-weight:400;letter-spacing:0.12px;-webkit-text-stroke:0.15px #1a1a1a;">Non-closing account</div>
<div class="t" style="left:1638px;top:517.20px;font-size:13px;line-height:13px;color:#1a1a1a;font-weight:400;-webkit-text-stroke:0.15px #1a1a1a;">Active</div>
<svg class="s" style="left:1826px;top:521px;" width="17" height="5" viewBox="0 0 17 5" fill="none"><circle cx="2.4" cy="2.2" r="1.45" fill="#466f85"/><circle cx="7.9" cy="2.2" r="1.45" fill="#466f85"/><circle cx="13.6" cy="2.2" r="1.45" fill="#466f85"/></svg>
<div class="b" style="left:34px;top:543px;width:1825px;height:35px;background:#f8f9f9;"></div>
<div class="b" style="left:33px;top:578px;width:1827px;height:1px;background:#cad6db;"></div>
<div class="b" style="left:54px;top:552px;width:16px;height:16px;border:1px solid #4f7489;border-radius:3px;background:#fff;"></div>
<div class="t" style="left:92px;top:553.20px;font-size:13px;line-height:13px;color:#1a1a1a;font-weight:400;-webkit-text-stroke:0.15px #1a1a1a;">15200</div>
<div class="t" style="left:270px;top:552.65px;font-size:14px;line-height:14px;color:#087f43;font-weight:400;letter-spacing:0.06px;-webkit-text-stroke:0.15px #087f43;"><span class="u">Buildings</span></div>
<div class="t" style="left:446px;top:552.00px;font-size:13px;line-height:13px;color:#087f43;font-weight:400;-webkit-text-stroke:0.15px #087f43;"><span class="u">Ledger</span></div>
<div class="t" style="left:576px;top:553.20px;font-size:13px;line-height:13px;color:#1a1a1a;font-weight:400;-webkit-text-stroke:0.15px #1a1a1a;">Debit</div>
<svg class="s" style="left:929px;top:553px;" width="16" height="12" viewBox="0 0 16 12" fill="none"><path d="M1.6 5.6 L6.1 9.9 L14.4 1.6" stroke="#5b5b5b" stroke-width="1.4" stroke-linecap="round" stroke-linejoin="round"/></svg>
<div class="t" style="left:1284px;top:553.20px;font-size:13px;line-height:13px;color:#1a1a1a;font-weight:400;letter-spacing:0.12px;-webkit-text-stroke:0.15px #1a1a1a;">Non-closing account</div>
<div class="t" style="left:1638px;top:553.20px;font-size:13px;line-height:13px;color:#1a1a1a;font-weight:400;-webkit-text-stroke:0.15px #1a1a1a;">Active</div>
<svg class="s" style="left:1826px;top:557px;" width="17" height="5" viewBox="0 0 17 5" fill="none"><circle cx="2.4" cy="2.2" r="1.45" fill="#466f85"/><circle cx="7.9" cy="2.2" r="1.45" fill="#466f85"/><circle cx="13.6" cy="2.2" r="1.45" fill="#466f85"/></svg>
<div class="b" style="left:33px;top:614px;width:1827px;height:1px;background:#cad6db;"></div>
<div class="b" style="left:54px;top:588px;width:16px;height:16px;border:1px solid #4f7489;border-radius:3px;background:#fff;"></div>
<div class="t" style="left:92px;top:589.20px;font-size:13px;line-height:13px;color:#1a1a1a;font-weight:400;-webkit-text-stroke:0.15px #1a1a1a;">15300</div>
<div class="t" style="left:270px;top:588.65px;font-size:14px;line-height:14px;color:#087f43;font-weight:400;letter-spacing:0.06px;-webkit-text-stroke:0.15px #087f43;"><span class="u">Land</span></div>
<div class="t" style="left:446px;top:588.00px;font-size:13px;line-height:13px;color:#087f43;font-weight:400;-webkit-text-stroke:0.15px #087f43;"><span class="u">Ledger</span></div>
<div class="t" style="left:576px;top:589.20px;font-size:13px;line-height:13px;color:#1a1a1a;font-weight:400;-webkit-text-stroke:0.15px #1a1a1a;">Debit</div>
<svg class="s" style="left:929px;top:589px;" width="16" height="12" viewBox="0 0 16 12" fill="none"><path d="M1.6 5.6 L6.1 9.9 L14.4 1.6" stroke="#5b5b5b" stroke-width="1.4" stroke-linecap="round" stroke-linejoin="round"/></svg>
<div class="t" style="left:1284px;top:589.20px;font-size:13px;line-height:13px;color:#1a1a1a;font-weight:400;letter-spacing:0.12px;-webkit-text-stroke:0.15px #1a1a1a;">Non-closing account</div>
<div class="t" style="left:1638px;top:589.20px;font-size:13px;line-height:13px;color:#1a1a1a;font-weight:400;-webkit-text-stroke:0.15px #1a1a1a;">Active</div>
<svg class="s" style="left:1826px;top:593px;" width="17" height="5" viewBox="0 0 17 5" fill="none"><circle cx="2.4" cy="2.2" r="1.45" fill="#466f85"/><circle cx="7.9" cy="2.2" r="1.45" fill="#466f85"/><circle cx="13.6" cy="2.2" r="1.45" fill="#466f85"/></svg>
<div class="b" style="left:34px;top:615px;width:1825px;height:35px;background:#f8f9f9;"></div>
<div class="b" style="left:33px;top:650px;width:1827px;height:1px;background:#cad6db;"></div>
<div class="b" style="left:54px;top:624px;width:16px;height:16px;border:1px solid #4f7489;border-radius:3px;background:#fff;"></div>
<div class="t" style="left:92px;top:625.20px;font-size:13px;line-height:13px;color:#1a1a1a;font-weight:400;-webkit-text-stroke:0.15px #1a1a1a;">15600</div>
<div class="t" style="left:270px;top:624.65px;font-size:14px;line-height:14px;color:#087f43;font-weight:400;letter-spacing:0.12px;-webkit-text-stroke:0.15px #087f43;"><span class="u">Accum Depreciation - </span>…</div>
<div class="t" style="left:446px;top:624.00px;font-size:13px;line-height:13px;color:#087f43;font-weight:400;-webkit-text-stroke:0.15px #087f43;"><span class="u">Ledger</span></div>
<div class="t" style="left:576px;top:625.20px;font-size:13px;line-height:13px;color:#1a1a1a;font-weight:400;-webkit-text-stroke:0.15px #1a1a1a;">Credit</div>
<svg class="s" style="left:929px;top:625px;" width="16" height="12" viewBox="0 0 16 12" fill="none"><path d="M1.6 5.6 L6.1 9.9 L14.4 1.6" stroke="#5b5b5b" stroke-width="1.4" stroke-linecap="round" stroke-linejoin="round"/></svg>
<div class="t" style="left:1284px;top:625.20px;font-size:13px;line-height:13px;color:#1a1a1a;font-weight:400;letter-spacing:0.12px;-webkit-text-stroke:0.15px #1a1a1a;">Non-closing account</div>
<div class="t" style="left:1638px;top:625.20px;font-size:13px;line-height:13px;color:#1a1a1a;font-weight:400;-webkit-text-stroke:0.15px #1a1a1a;">Active</div>
<svg class="s" style="left:1826px;top:629px;" width="17" height="5" viewBox="0 0 17 5" fill="none"><circle cx="2.4" cy="2.2" r="1.45" fill="#466f85"/><circle cx="7.9" cy="2.2" r="1.45" fill="#466f85"/><circle cx="13.6" cy="2.2" r="1.45" fill="#466f85"/></svg>
<div class="b" style="left:33px;top:686px;width:1827px;height:1px;background:#cad6db;"></div>
<div class="b" style="left:54px;top:660px;width:16px;height:16px;border:1px solid #4f7489;border-radius:3px;background:#fff;"></div>
<div class="t" style="left:92px;top:661.20px;font-size:13px;line-height:13px;color:#1a1a1a;font-weight:400;-webkit-text-stroke:0.15px #1a1a1a;">15610</div>
<div class="t" style="left:270px;top:660.65px;font-size:14px;line-height:14px;color:#087f43;font-weight:400;letter-spacing:0.12px;-webkit-text-stroke:0.15px #087f43;"><span class="u">Accum Depreciation - </span>…</div>
<div class="t" style="left:446px;top:660.00px;font-size:13px;line-height:13px;color:#087f43;font-weight:400;-webkit-text-stroke:0.15px #087f43;"><span class="u">Ledger</span></div>
<div class="t" style="left:576px;top:661.20px;font-size:13px;line-height:13px;color:#1a1a1a;font-weight:400;-webkit-text-stroke:0.15px #1a1a1a;">Credit</div>
<svg class="s" style="left:929px;top:661px;" width="16" height="12" viewBox="0 0 16 12" fill="none"><path d="M1.6 5.6 L6.1 9.9 L14.4 1.6" stroke="#5b5b5b" stroke-width="1.4" stroke-linecap="round" stroke-linejoin="round"/></svg>
<div class="t" style="left:1284px;top:661.20px;font-size:13px;line-height:13px;color:#1a1a1a;font-weight:400;letter-spacing:0.12px;-webkit-text-stroke:0.15px #1a1a1a;">Non-closing account</div>
<div class="t" style="left:1638px;top:661.20px;font-size:13px;line-height:13px;color:#1a1a1a;font-weight:400;-webkit-text-stroke:0.15px #1a1a1a;">Active</div>
<svg class="s" style="left:1826px;top:665px;" width="17" height="5" viewBox="0 0 17 5" fill="none"><circle cx="2.4" cy="2.2" r="1.45" fill="#466f85"/><circle cx="7.9" cy="2.2" r="1.45" fill="#466f85"/><circle cx="13.6" cy="2.2" r="1.45" fill="#466f85"/></svg>
<div class="b" style="left:34px;top:687px;width:1825px;height:35px;background:#f8f9f9;"></div>
<div class="b" style="left:33px;top:722px;width:1827px;height:1px;background:#cad6db;"></div>
<div class="b" style="left:54px;top:696px;width:16px;height:16px;border:1px solid #4f7489;border-radius:3px;background:#fff;"></div>
<div class="t" style="left:92px;top:697.20px;font-size:13px;line-height:13px;color:#1a1a1a;font-weight:400;-webkit-text-stroke:0.15px #1a1a1a;">15620</div>
<div class="t" style="left:270px;top:696.65px;font-size:14px;line-height:14px;color:#087f43;font-weight:400;letter-spacing:0.12px;-webkit-text-stroke:0.15px #087f43;"><span class="u">Accum Depreciation - </span>…</div>
<div class="t" style="left:446px;top:696.00px;font-size:13px;line-height:13px;color:#087f43;font-weight:400;-webkit-text-stroke:0.15px #087f43;"><span class="u">Ledger</span></div>
<div class="t" style="left:576px;top:697.20px;font-size:13px;line-height:13px;color:#1a1a1a;font-weight:400;-webkit-text-stroke:0.15px #1a1a1a;">Credit</div>
<svg class="s" style="left:929px;top:697px;" width="16" height="12" viewBox="0 0 16 12" fill="none"><path d="M1.6 5.6 L6.1 9.9 L14.4 1.6" stroke="#5b5b5b" stroke-width="1.4" stroke-linecap="round" stroke-linejoin="round"/></svg>
<div class="t" style="left:1284px;top:697.20px;font-size:13px;line-height:13px;color:#1a1a1a;font-weight:400;letter-spacing:0.12px;-webkit-text-stroke:0.15px #1a1a1a;">Non-closing account</div>
<div class="t" style="left:1638px;top:697.20px;font-size:13px;line-height:13px;color:#1a1a1a;font-weight:400;-webkit-text-stroke:0.15px #1a1a1a;">Active</div>
<svg class="s" style="left:1826px;top:701px;" width="17" height="5" viewBox="0 0 17 5" fill="none"><circle cx="2.4" cy="2.2" r="1.45" fill="#466f85"/><circle cx="7.9" cy="2.2" r="1.45" fill="#466f85"/><circle cx="13.6" cy="2.2" r="1.45" fill="#466f85"/></svg>
<div class="b" style="left:33px;top:758px;width:1827px;height:1px;background:#cad6db;"></div>
<div class="b" style="left:54px;top:732px;width:16px;height:16px;border:1px solid #4f7489;border-radius:3px;background:#fff;"></div>
<div class="t" style="left:92px;top:733.20px;font-size:13px;line-height:13px;color:#1a1a1a;font-weight:400;-webkit-text-stroke:0.15px #1a1a1a;">15700</div>
<div class="t" style="left:270px;top:732.65px;font-size:14px;line-height:14px;color:#087f43;font-weight:400;letter-spacing:0.12px;-webkit-text-stroke:0.15px #087f43;"><span class="u">Accum Depreciation - </span>…</div>
<div class="t" style="left:446px;top:732.00px;font-size:13px;line-height:13px;color:#087f43;font-weight:400;-webkit-text-stroke:0.15px #087f43;"><span class="u">Ledger</span></div>
<div class="t" style="left:576px;top:733.20px;font-size:13px;line-height:13px;color:#1a1a1a;font-weight:400;-webkit-text-stroke:0.15px #1a1a1a;">Credit</div>
<svg class="s" style="left:929px;top:733px;" width="16" height="12" viewBox="0 0 16 12" fill="none"><path d="M1.6 5.6 L6.1 9.9 L14.4 1.6" stroke="#5b5b5b" stroke-width="1.4" stroke-linecap="round" stroke-linejoin="round"/></svg>
<div class="t" style="left:1284px;top:733.20px;font-size:13px;line-height:13px;color:#1a1a1a;font-weight:400;letter-spacing:0.12px;-webkit-text-stroke:0.15px #1a1a1a;">Non-closing account</div>
<div class="t" style="left:1638px;top:733.20px;font-size:13px;line-height:13px;color:#1a1a1a;font-weight:400;-webkit-text-stroke:0.15px #1a1a1a;">Active</div>
<svg class="s" style="left:1826px;top:737px;" width="17" height="5" viewBox="0 0 17 5" fill="none"><circle cx="2.4" cy="2.2" r="1.45" fill="#466f85"/><circle cx="7.9" cy="2.2" r="1.45" fill="#466f85"/><circle cx="13.6" cy="2.2" r="1.45" fill="#466f85"/></svg>
<div class="b" style="left:34px;top:759px;width:1825px;height:35px;background:#f8f9f9;"></div>
<div class="b" style="left:33px;top:794px;width:1827px;height:1px;background:#cad6db;"></div>
<div class="b" style="left:54px;top:768px;width:16px;height:16px;border:1px solid #4f7489;border-radius:3px;background:#fff;"></div>
<div class="t" style="left:92px;top:769.20px;font-size:13px;line-height:13px;color:#1a1a1a;font-weight:400;-webkit-text-stroke:0.15px #1a1a1a;">17000</div>
<div class="t" style="left:270px;top:768.65px;font-size:14px;line-height:14px;color:#087f43;font-weight:400;letter-spacing:0.06px;-webkit-text-stroke:0.15px #087f43;"><span class="u">Long Term Investments</span></div>
<div class="t" style="left:446px;top:768.00px;font-size:13px;line-height:13px;color:#087f43;font-weight:400;-webkit-text-stroke:0.15px #087f43;"><span class="u">Ledger</span></div>
<div class="t" style="left:576px;top:769.20px;font-size:13px;line-height:13px;color:#1a1a1a;font-weight:400;-webkit-text-stroke:0.15px #1a1a1a;">Credit</div>
<svg class="s" style="left:929px;top:769px;" width="16" height="12" viewBox="0 0 16 12" fill="none"><path d="M1.6 5.6 L6.1 9.9 L14.4 1.6" stroke="#5b5b5b" stroke-width="1.4" stroke-linecap="round" stroke-linejoin="round"/></svg>
<div class="t" style="left:1284px;top:769.20px;font-size:13px;line-height:13px;color:#1a1a1a;font-weight:400;letter-spacing:0.12px;-webkit-text-stroke:0.15px #1a1a1a;">Non-closing account</div>
<div class="t" style="left:1638px;top:769.20px;font-size:13px;line-height:13px;color:#1a1a1a;font-weight:400;-webkit-text-stroke:0.15px #1a1a1a;">Active</div>
<svg class="s" style="left:1826px;top:773px;" width="17" height="5" viewBox="0 0 17 5" fill="none"><circle cx="2.4" cy="2.2" r="1.45" fill="#466f85"/><circle cx="7.9" cy="2.2" r="1.45" fill="#466f85"/><circle cx="13.6" cy="2.2" r="1.45" fill="#466f85"/></svg>
<div class="b" style="left:33px;top:830px;width:1827px;height:1px;background:#cad6db;"></div>
<div class="b" style="left:54px;top:804px;width:16px;height:16px;border:1px solid #4f7489;border-radius:3px;background:#fff;"></div>
<div class="t" style="left:92px;top:805.20px;font-size:13px;line-height:13px;color:#1a1a1a;font-weight:400;-webkit-text-stroke:0.15px #1a1a1a;">17100</div>
<div class="t" style="left:270px;top:804.65px;font-size:14px;line-height:14px;color:#087f43;font-weight:400;letter-spacing:0.06px;-webkit-text-stroke:0.15px #087f43;"><span class="u">Investment in Subsidiary</span></div>
<div class="t" style="left:446px;top:804.00px;font-size:13px;line-height:13px;color:#087f43;font-weight:400;-webkit-text-stroke:0.15px #087f43;"><span class="u">Ledger</span></div>
<div class="t" style="left:576px;top:805.20px;font-size:13px;line-height:13px;color:#1a1a1a;font-weight:400;-webkit-text-stroke:0.15px #1a1a1a;">Credit</div>
<svg class="s" style="left:929px;top:805px;" width="16" height="12" viewBox="0 0 16 12" fill="none"><path d="M1.6 5.6 L6.1 9.9 L14.4 1.6" stroke="#5b5b5b" stroke-width="1.4" stroke-linecap="round" stroke-linejoin="round"/></svg>
<div class="t" style="left:1284px;top:805.20px;font-size:13px;line-height:13px;color:#1a1a1a;font-weight:400;letter-spacing:0.12px;-webkit-text-stroke:0.15px #1a1a1a;">Non-closing account</div>
<div class="t" style="left:1638px;top:805.20px;font-size:13px;line-height:13px;color:#1a1a1a;font-weight:400;-webkit-text-stroke:0.15px #1a1a1a;">Active</div>
<svg class="s" style="left:1826px;top:809px;" width="17" height="5" viewBox="0 0 17 5" fill="none"><circle cx="2.4" cy="2.2" r="1.45" fill="#466f85"/><circle cx="7.9" cy="2.2" r="1.45" fill="#466f85"/><circle cx="13.6" cy="2.2" r="1.45" fill="#466f85"/></svg>
<div class="b" style="left:34px;top:831px;width:1825px;height:35px;background:#f8f9f9;"></div>
<div class="b" style="left:33px;top:866px;width:1827px;height:1px;background:#cad6db;"></div>
<div class="b" style="left:54px;top:840px;width:16px;height:16px;border:1px solid #4f7489;border-radius:3px;background:#fff;"></div>
<div class="t" style="left:92px;top:841.20px;font-size:13px;line-height:13px;color:#1a1a1a;font-weight:400;-webkit-text-stroke:0.15px #1a1a1a;">18100</div>
<div class="t" style="left:270px;top:840.65px;font-size:14px;line-height:14px;color:#087f43;font-weight:400;letter-spacing:0.12px;-webkit-text-stroke:0.15px #087f43;"><span class="u">Deposits and Prepaym</span>…</div>
<div class="t" style="left:446px;top:840.00px;font-size:13px;line-height:13px;color:#087f43;font-weight:400;-webkit-text-stroke:0.15px #087f43;"><span class="u">Ledger</span></div>
<div class="t" style="left:576px;top:841.20px;font-size:13px;line-height:13px;color:#1a1a1a;font-weight:400;-webkit-text-stroke:0.15px #1a1a1a;">Credit</div>
<svg class="s" style="left:929px;top:841px;" width="16" height="12" viewBox="0 0 16 12" fill="none"><path d="M1.6 5.6 L6.1 9.9 L14.4 1.6" stroke="#5b5b5b" stroke-width="1.4" stroke-linecap="round" stroke-linejoin="round"/></svg>
<div class="t" style="left:1284px;top:841.20px;font-size:13px;line-height:13px;color:#1a1a1a;font-weight:400;letter-spacing:0.12px;-webkit-text-stroke:0.15px #1a1a1a;">Non-closing account</div>
<div class="t" style="left:1638px;top:841.20px;font-size:13px;line-height:13px;color:#1a1a1a;font-weight:400;-webkit-text-stroke:0.15px #1a1a1a;">Active</div>
<svg class="s" style="left:1826px;top:845px;" width="17" height="5" viewBox="0 0 17 5" fill="none"><circle cx="2.4" cy="2.2" r="1.45" fill="#466f85"/><circle cx="7.9" cy="2.2" r="1.45" fill="#466f85"/><circle cx="13.6" cy="2.2" r="1.45" fill="#466f85"/></svg>
<div class="b" style="left:33px;top:902px;width:1827px;height:1px;background:#cad6db;"></div>
<div class="b" style="left:54px;top:876px;width:16px;height:16px;border:1px solid #4f7489;border-radius:3px;background:#fff;"></div>
<div class="t" style="left:92px;top:877.20px;font-size:13px;line-height:13px;color:#1a1a1a;font-weight:400;-webkit-text-stroke:0.15px #1a1a1a;">18200</div>
<div class="t" style="left:270px;top:876.65px;font-size:14px;line-height:14px;color:#087f43;font-weight:400;letter-spacing:0.12px;-webkit-text-stroke:0.15px #087f43;"><span class="u">Employee Advances/L</span>…</div>
<div class="t" style="left:446px;top:876.00px;font-size:13px;line-height:13px;color:#087f43;font-weight:400;-webkit-text-stroke:0.15px #087f43;"><span class="u">Ledger</span></div>
<div class="t" style="left:576px;top:877.20px;font-size:13px;line-height:13px;color:#1a1a1a;font-weight:400;-webkit-text-stroke:0.15px #1a1a1a;">Credit</div>
<svg class="s" style="left:929px;top:877px;" width="16" height="12" viewBox="0 0 16 12" fill="none"><path d="M1.6 5.6 L6.1 9.9 L14.4 1.6" stroke="#5b5b5b" stroke-width="1.4" stroke-linecap="round" stroke-linejoin="round"/></svg>
<div class="t" style="left:1284px;top:877.20px;font-size:13px;line-height:13px;color:#1a1a1a;font-weight:400;letter-spacing:0.12px;-webkit-text-stroke:0.15px #1a1a1a;">Non-closing account</div>
<div class="t" style="left:1638px;top:877.20px;font-size:13px;line-height:13px;color:#1a1a1a;font-weight:400;-webkit-text-stroke:0.15px #1a1a1a;">Active</div>
<svg class="s" style="left:1826px;top:881px;" width="17" height="5" viewBox="0 0 17 5" fill="none"><circle cx="2.4" cy="2.2" r="1.45" fill="#466f85"/><circle cx="7.9" cy="2.2" r="1.45" fill="#466f85"/><circle cx="13.6" cy="2.2" r="1.45" fill="#466f85"/></svg>
<div class="b" style="left:34px;top:903px;width:1825px;height:35px;background:#f8f9f9;"></div>
<div class="b" style="left:33px;top:938px;width:1827px;height:1px;background:#cad6db;"></div>
<div class="b" style="left:54px;top:912px;width:16px;height:16px;border:1px solid #4f7489;border-radius:3px;background:#fff;"></div>
<div class="t" style="left:92px;top:913.20px;font-size:13px;line-height:13px;color:#1a1a1a;font-weight:400;-webkit-text-stroke:0.15px #1a1a1a;">18300</div>
<div class="t" style="left:270px;top:912.65px;font-size:14px;line-height:14px;color:#087f43;font-weight:400;letter-spacing:0.06px;-webkit-text-stroke:0.15px #087f43;"><span class="u">Escrows and Reserves</span></div>
<div class="t" style="left:446px;top:912.00px;font-size:13px;line-height:13px;color:#087f43;font-weight:400;-webkit-text-stroke:0.15px #087f43;"><span class="u">Ledger</span></div>
<div class="t" style="left:576px;top:913.20px;font-size:13px;line-height:13px;color:#1a1a1a;font-weight:400;-webkit-text-stroke:0.15px #1a1a1a;">Credit</div>
<svg class="s" style="left:929px;top:913px;" width="16" height="12" viewBox="0 0 16 12" fill="none"><path d="M1.6 5.6 L6.1 9.9 L14.4 1.6" stroke="#5b5b5b" stroke-width="1.4" stroke-linecap="round" stroke-linejoin="round"/></svg>
<div class="t" style="left:1284px;top:913.20px;font-size:13px;line-height:13px;color:#1a1a1a;font-weight:400;letter-spacing:0.12px;-webkit-text-stroke:0.15px #1a1a1a;">Non-closing account</div>
<div class="t" style="left:1638px;top:913.20px;font-size:13px;line-height:13px;color:#1a1a1a;font-weight:400;-webkit-text-stroke:0.15px #1a1a1a;">Active</div>
<svg class="s" style="left:1826px;top:917px;" width="17" height="5" viewBox="0 0 17 5" fill="none"><circle cx="2.4" cy="2.2" r="1.45" fill="#466f85"/><circle cx="7.9" cy="2.2" r="1.45" fill="#466f85"/><circle cx="13.6" cy="2.2" r="1.45" fill="#466f85"/></svg>
<div class="b" style="left:34px;top:939px;width:1825px;height:34px;background:#f1f4f5;"></div>
<div class="t" style="left:42.2px;top:948.15px;font-size:14px;line-height:14px;color:#1a1a1a;font-weight:400;-webkit-text-stroke:0.45px #1a1a1a;">Show</div>
<div class="b" style="left:86.5px;top:939.3px;width:75.5px;height:31.300000000000068px;border:1px solid #4f7489;border-radius:4px;background:#fff;"></div>
<div class="t" style="left:95.5px;top:948.84px;font-size:12px;line-height:12px;color:#1a1a1a;font-weight:400;-webkit-text-stroke:0.15px #1a1a1a;">20</div>
<svg class="s" style="left:139px;top:951px;" width="10" height="8" viewBox="0 0 10 8" fill="none"><path d="M2 2.5 L5 5.5 L8 2.5" stroke="#4f7489" stroke-width="1.6" stroke-linecap="round" stroke-linejoin="round"/></svg>
<div class="t" style="left:779.5px;top:948.83px;font-size:13.2px;line-height:13.2px;color:#1a1a1a;font-weight:400;-webkit-text-stroke:0.45px #1a1a1a;">First</div>
<svg class="s" style="left:810px;top:935px;" width="80" height="40" viewBox="0 0 80 40" fill="none"><rect x="7.4" y="6.3" width="68" height="28.8" rx="14.4" stroke="#fbab2b" stroke-width="3"/></svg>
<div class="t" style="left:825.5px;top:948.83px;font-size:13.2px;line-height:13.2px;color:#1a1a1a;font-weight:400;-webkit-text-stroke:0.45px #1a1a1a;">Previous</div>
<div class="t" style="left:903.5px;top:949.15px;font-size:14px;line-height:14px;color:#1a1a1a;font-weight:400;-webkit-text-stroke:0.15px #1a1a1a;">Page</div>
<div class="b" style="left:940.3px;top:943.7px;width:38.200000000000045px;height:24.5px;border:1px solid #4f7489;border-radius:4px;background:#fff;"></div>
<div class="t" style="left:954.5px;top:949.15px;font-size:14px;line-height:14px;color:#1a1a1a;font-weight:400;-webkit-text-stroke:0.15px #1a1a1a;">2</div>
<div class="t" style="left:982.5px;top:949.15px;font-size:14px;line-height:14px;color:#1a1a1a;font-weight:400;-webkit-text-stroke:0.15px #1a1a1a;">of 15</div>
<div class="t" style="left:1040.5px;top:948.74px;font-size:13.3px;line-height:13.3px;color:#1a1a1a;font-weight:400;-webkit-text-stroke:0.45px #1a1a1a;">Next</div>
<div class="t" style="left:1088.2px;top:948.74px;font-size:13.3px;line-height:13.3px;color:#1a1a1a;font-weight:400;-webkit-text-stroke:0.45px #1a1a1a;">Last</div>
<div class="t" style="left:1781.5px;top:949.15px;font-size:14px;line-height:14px;color:#1a1a1a;font-weight:400;-webkit-text-stroke:0.15px #1a1a1a;">287 items</div>
<svg class="s" style="left:560px;top:146px;" width="190" height="800" viewBox="0 0 190 800" fill="none"><rect x="5.6" y="5.4" width="179" height="788.2" rx="19" stroke="#fd2b20" stroke-width="4.8"/></svg>
</body></html>
